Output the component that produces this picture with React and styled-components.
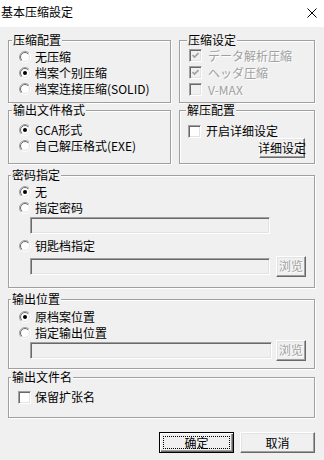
import styled, { createGlobalStyle } from 'styled-components';

const GlobalStyle = createGlobalStyle`
  * { box-sizing: border-box; }
  html, body { margin: 0; padding: 0; background: #f0f0f0; }
  body {
    font-family: "Noto Sans CJK SC", "Noto Sans", sans-serif;
    font-size: 12px;
    line-height: 14px;
    color: #000;
  }
`;

const Window = styled.div`
  width: 324px;
  height: 460px;
  background: #f0f0f0;
  overflow: hidden;
`;

const TitleBar = styled.div`
  height: 27px;
  background: #fff;
  display: flex;
  justify-content: space-between;
  align-items: flex-start;
  padding: 5px 7px 0 1px;
`;

const Title = styled.span`
  line-height: 14px;
`;

const CloseIcon = styled.svg`
  margin-top: 3px;
  display: block;
`;

const Content = styled.div`
  padding: 6px 9px 0 8px;
  display: flex;
  flex-direction: column;
`;

const Row = styled.div`
  display: grid;
  grid-template-columns: 163px 136px;
  column-gap: 8px;
  margin-top: ${p => p.$mt || 0}px;
`;

const Group = styled.fieldset`
  margin: ${p => p.$mt || 0}px 0 0;
  padding: 0;
  min-width: 0;
  border: 1px solid #a0a0a0;
  box-shadow: inset 1px 1px 0 #fff, 1px 1px 0 #fff;
`;

const Legend = styled.legend`
  padding: 0 1px;
  margin-left: ${p => p.$ml ?? 3}px;
  height: 14px;
  line-height: 14px;
  background: #f0f0f0;
  white-space: nowrap;
`;

const GroupBody = styled.div`
  display: flex;
  flex-direction: column;
  padding: ${p => p.$pad};
`;

const Option = styled.div`
  display: flex;
  align-items: center;
  gap: ${p => p.$gap ?? 4}px;
  height: ${p => p.$h || 16}px;
  line-height: 14px;
  margin-top: ${p => p.$mt || 0}px;
  white-space: nowrap;
  color: ${p => (p.$disabled ? '#a0a0a0' : '#000')};
  text-shadow: ${p => (p.$disabled ? '1px 1px 0 #fff' : 'none')};
`;

const RadioSvg = styled.svg`
  flex: none;
  display: block;
`;

const Box = styled.span`
  flex: none;
  width: 13px;
  height: 13px;
  display: inline-flex;
  align-items: center;
  justify-content: center;
  border: 1px solid;
  border-color: #a0a0a0 #fff #fff #a0a0a0;
  box-shadow: inset 1px 1px 0 #696969, inset -1px -1px 0 #e3e3e3;
  background: ${p => (p.$disabled ? '#f0f0f0' : '#fff')};
`;

const FileRow = styled.div`
  display: flex;
  align-items: center;
  gap: ${p => p.$gap ?? 6}px;
  height: ${p => p.$h || 22}px;
  margin: ${p => p.$mt || 0}px 0 0 11px;
`;

const Field = styled.div`
  width: ${p => p.$w}px;
  height: 17px;
  border: 1px solid;
  border-color: #a0a0a0 #fff #fff #a0a0a0;
  box-shadow: inset 1px 1px 0 #696969, inset -1px -1px 0 #e3e3e3;
  background: #f0f0f0;
`;

const Button = styled.button`
  width: ${p => p.$w}px;
  height: ${p => p.$h}px;
  padding: 0;
  margin: 0;
  font: inherit;
  font-size: 12px;
  line-height: 14px;
  display: flex;
  align-items: center;
  justify-content: center;
  white-space: nowrap;
  overflow: visible;
  background: #f0f0f0;
  border: 1px solid;
  border-color: #fff #696969 #696969 #fff;
  box-shadow: inset -1px -1px 0 #a0a0a0, inset 1px 1px 0 #e3e3e3;
  color: ${p => (p.$disabled ? '#a0a0a0' : '#000')};
  text-shadow: ${p => (p.$disabled ? '1px 1px 0 #fff' : 'none')};
  flex: none;
`;

const DefaultButton = styled(Button)`
  border: 1px solid #000;
  padding: 3px 3px;
  box-shadow: inset 1px 1px 0 #fff, inset -1px -1px 0 #696969, inset -2px -2px 0 #a0a0a0;
`;

const FocusRing = styled.span`
  flex: 1;
  align-self: stretch;
  display: flex;
  align-items: center;
  justify-content: center;
  border: 1px dotted #000;
`;

const RightAlign = styled.div`
  display: flex;
  justify-content: flex-end;
`;

const ButtonBar = styled.div`
  display: flex;
  justify-content: flex-end;
  gap: 6px;
  margin-top: 14px;
`;

function Radio({ checked }) {
  return (
    <RadioSvg width="12" height="12" viewBox="0 0 12 12">
      <defs>
        <linearGradient id="radioOuter" x1="0" y1="0" x2="1" y2="1">
          <stop offset="0.5" stopColor="#a0a0a0" />
          <stop offset="0.5" stopColor="#fff" />
        </linearGradient>
        <linearGradient id="radioInner" x1="0" y1="0" x2="1" y2="1">
          <stop offset="0.5" stopColor="#696969" />
          <stop offset="0.5" stopColor="#e3e3e3" />
        </linearGradient>
      </defs>
      <circle cx="6" cy="6" r="5.5" fill="none" stroke="url(#radioOuter)" />
      <circle cx="6" cy="6" r="4.5" fill="#fff" stroke="url(#radioInner)" />
      {checked && <circle cx="6" cy="6" r="2" fill="#000" />}
    </RadioSvg>
  );
}

function Check({ checked, disabled }) {
  return (
    <Box $disabled={disabled}>
      {checked && (
        <svg width="7" height="7" viewBox="0 0 7 7">
          <path d="M0.5 3 L2.5 5 L6.5 1" fill="none" stroke={disabled ? '#a0a0a0' : '#000'} strokeWidth="1.6" />
        </svg>
      )}
    </Box>
  );
}

function Browse() {
  return <Button $w={30} $h={21} $disabled>浏览</Button>;
}

export default function App() {
  return (
    <Window>
      <GlobalStyle />
      <TitleBar>
        <Title>基本压缩設定</Title>
        <CloseIcon width="10" height="10" viewBox="0 0 10 10">
          <path d="M0.5 0.5 L9.5 9.5 M9.5 0.5 L0.5 9.5" stroke="#000" strokeWidth="1" />
        </CloseIcon>
      </TitleBar>

      <Content>
        <Row>
          <Group>
            <Legend>压缩配置</Legend>
            <GroupBody $pad="2px 6px 5px 10px">
              <Option><Radio />无压缩</Option>
              <Option><Radio checked />档案个别压缩</Option>
              <Option><Radio />档案连接压缩(SOLID)</Option>
            </GroupBody>
          </Group>
          <Group>
            <Legend $ml={7}>压缩设定</Legend>
            <GroupBody $pad="0 6px 4px 9px">
              <Option $h={17} $gap={6} $disabled><Check checked disabled />データ解析圧縮</Option>
              <Option $h={17} $gap={6} $disabled><Check checked disabled />ヘッダ圧縮</Option>
              <Option $h={17} $gap={6} $disabled><Check disabled />V-MAX</Option>
            </GroupBody>
          </Group>
        </Row>

        <Row>
          <Group>
            <Legend>输出文件格式</Legend>
            <GroupBody $pad="5px 6px 9px 10px">
              <Option><Radio checked />GCA形式</Option>
              <Option><Radio />自己解压格式(EXE)</Option>
            </GroupBody>
          </Group>
          <Group>
            <Legend $ml={6}>解压配置</Legend>
            <GroupBody $pad="7px 9px 5px 8px">
              <Option $h={14} $gap={5}><Check />开启详细设定</Option>
              <RightAlign>
                <Button $w={46} $h={20}>详细设定</Button>
              </RightAlign>
            </GroupBody>
          </Group>
        </Row>

        <Group $mt={4}>
          <Legend $ml={2}>密码指定</Legend>
          <GroupBody $pad="2px 8px 10px 10px">
            <Option><Radio checked />无</Option>
            <Option><Radio />指定密码</Option>
            <FileRow $h={17} $mt={1}>
              <Field $w={240} />
            </FileRow>
            <Option $mt={4}><Radio />钥匙档指定</Option>
            <FileRow $h={22} $mt={1}>
              <Field $w={240} />
              <Browse />
            </FileRow>
          </GroupBody>
        </Group>

        <Group $mt={4}>
          <Legend $ml={2}>输出位置</Legend>
          <GroupBody $pad="3px 8px 8px 10px">
            <Option><Radio checked />原档案位置</Option>
            <Option><Radio />指定输出位置</Option>
            <FileRow $h={20} $mt={-1} $gap={4}>
              <Field $w={242} />
              <Browse />
            </FileRow>
          </GroupBody>
        </Group>

        <Group $mt={1}>
          <Legend $ml={2}>输出文件名</Legend>
          <GroupBody $pad="5px 8px 12px 9px">
            <Option><Check />保留扩张名</Option>
          </GroupBody>
        </Group>

        <ButtonBar>
          <DefaultButton $w={75} $h={21}>
            <FocusRing>确定</FocusRing>
          </DefaultButton>
          <Button $w={75} $h={21}>取消</Button>
        </ButtonBar>
      </Content>
    </Window>
  );
}
